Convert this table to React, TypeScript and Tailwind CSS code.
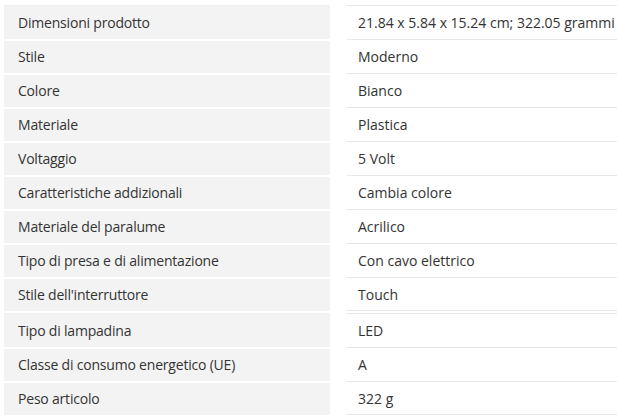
import React from 'react';

const primary: [string, string][] = [
  ['Dimensioni prodotto', '21.84 x 5.84 x 15.24 cm; 322.05 grammi'],
  ['Stile', 'Moderno'],
  ['Colore', 'Bianco'],
  ['Materiale', 'Plastica'],
  ['Voltaggio', '5 Volt'],
  ['Caratteristiche addizionali', 'Cambia colore'],
  ['Materiale del paralume', 'Acrilico'],
  ['Tipo di presa e di alimentazione', 'Con cavo elettrico'],
  ["Stile dell'interruttore", 'Touch'],
];

const secondary: [string, string][] = [
  ['Tipo di lampadina', 'LED'],
  ['Classe di consumo energetico (UE)', 'A'],
  ['Peso articolo', '322 g'],
];

function SpecTable({ rows }: { rows: [string, string][] }) {
  return (
    <div className="flex flex-col">
      {rows.map(([label, value], i) => (
        <div key={label} className="grid grid-cols-[326px_1fr] gap-x-[17px]">
          <div
            className={`h-[34px] bg-[#f3f3f3] pl-[14px] flex items-center ${
              i === 0 ? 'border-t border-[#f0f0f0]' : 'border-t-2 border-white pb-[2px]'
            }`}
          >
            <span className="tracking-[-0.2px]">{label}</span>
          </div>
          <div
            className={`h-[34px] pl-[11px] flex items-center border-t border-[#e7e7e7] whitespace-nowrap ${
              i === rows.length - 1 ? 'border-b' : ''
            }`}
          >
            {value}
          </div>
        </div>
      ))}
    </div>
  );
}

export default function App() {
  return (
    <div
      className="w-[617px] h-[420px] overflow-hidden bg-white pl-[4px] pt-[5px] text-[14px] text-[#333333]"
      style={{ fontFamily: '"Open Sans", "Liberation Sans", sans-serif' }}
    >
      <SpecTable rows={primary} />
      <div className="h-[2px]" />
      <SpecTable rows={secondary} />
    </div>
  );
}
